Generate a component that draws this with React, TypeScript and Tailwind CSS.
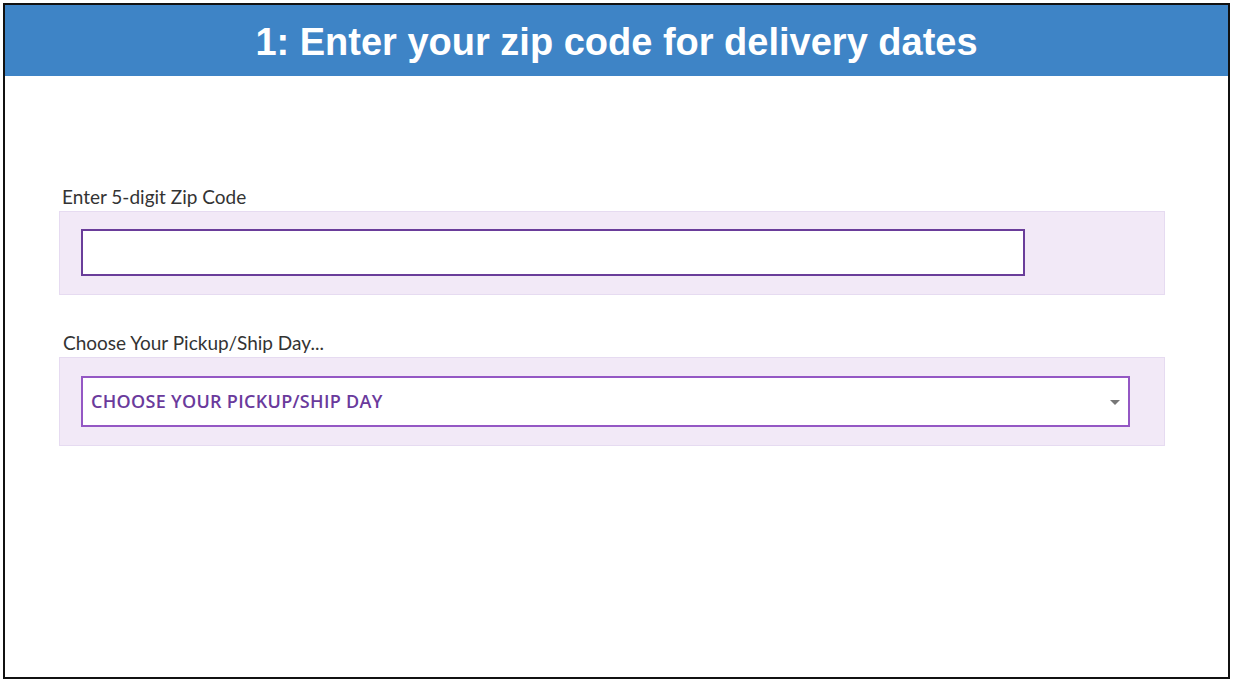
import React from 'react';

const App = () => {
  return (
    <div className="w-[1235px] h-[683px] bg-white pt-[3px] pl-[3px]">
      <div className="w-[1227px] h-[676px] border-2 border-[#111] flex flex-col">
        {/* Header */}
        <div className="h-[71px] bg-[#3e84c6] flex items-center justify-center">
          <h1 className="text-white font-bold text-[38px] leading-none font-['Liberation_Sans',Arial,sans-serif] pt-[2px]">
            1: Enter your zip code for delivery dates
          </h1>
        </div>

        <div className="pl-[54px] pt-[110px] font-['Lato','Open_Sans',sans-serif]">
          {/* Zip code */}
          <label className="block text-[19px] leading-[22px] text-[#333] pl-[3px] mb-[3px]">
            Enter 5-digit Zip Code
          </label>
          <div className="w-[1106px] h-[84px] bg-[#f2e9f7] border border-[#e6dbf1] pl-[21px] pt-[17px]">
            <input
              type="text"
              className="w-[944px] h-[47px] bg-white border-2 border-[#6a3d9a] outline-none"
            />
          </div>

          {/* Pickup / ship day */}
          <label className="block text-[19px] leading-[22px] text-[#333] pl-[4px] mt-[37px] mb-[3px]">
            Choose Your Pickup/Ship Day...
          </label>
          <div className="w-[1106px] h-[89px] bg-[#f2e9f7] border border-[#e6dbf1] pl-[21px] pt-[18px]">
            <div className="w-[1049px] h-[51px] bg-white border-2 border-[#9457c4] flex items-center justify-between pl-[8px] pr-[5px]">
              <span className="text-[18px] font-semibold text-[#6a3a9c] font-['Open_Sans','Noto_Sans',sans-serif] tracking-[0.3px]">
                CHOOSE YOUR PICKUP/SHIP DAY
              </span>
              <svg width="12" height="8" viewBox="0 0 12 8" className="mr-[2px]">
                <polygon points="1,2 11,2 6,7" fill="#777" />
              </svg>
            </div>
          </div>
        </div>
      </div>
    </div>
  );
};

export default App;
